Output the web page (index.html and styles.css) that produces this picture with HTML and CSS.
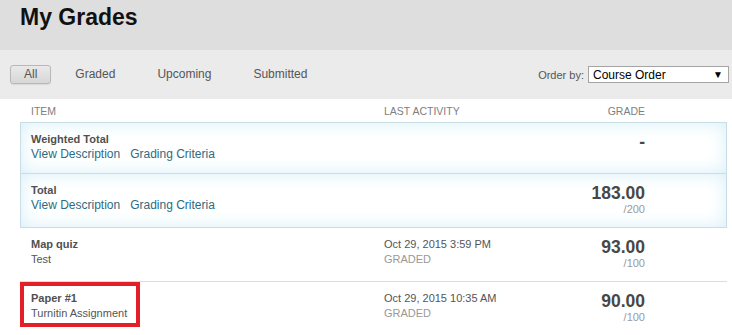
FILE: index.html
```html
<!DOCTYPE html>
<html>
<head>
    <title>My Grades</title>
    <link rel="stylesheet" href="styles.css">
</head>
<body>
    <div class="page-head">
        <h1>My Grades</h1>
    </div>

    <div class="toolbar">
        <div class="tabs">
            <span class="tab active">All</span>
            <span class="tab">Graded</span>
            <span class="tab">Upcoming</span>
            <span class="tab">Submitted</span>
        </div>
        <div class="order">
            <label>Order by:</label>
            <div class="order-select">
                <span>Course Order</span>
                <span class="arrow">&#9660;</span>
            </div>
        </div>
    </div>

    <div class="grades">
        <div class="row col-head">
            <div>Item</div>
            <div>Last Activity</div>
            <div class="grade-col">Grade</div>
        </div>

        <div class="row total">
            <div>
                <div class="title">Weighted Total</div>
                <div class="links"><a href="#">View Description</a><a href="#">Grading Criteria</a></div>
            </div>
            <div></div>
            <div class="grade-col">
                <div class="score">-</div>
            </div>
        </div>

        <div class="row total">
            <div>
                <div class="title">Total</div>
                <div class="links"><a href="#">View Description</a><a href="#">Grading Criteria</a></div>
            </div>
            <div></div>
            <div class="grade-col">
                <div class="score">183.00</div>
                <div class="points">/200</div>
            </div>
        </div>

        <div class="row">
            <div>
                <div class="title">Map quiz</div>
                <div class="sub">Test</div>
            </div>
            <div>
                <div class="date">Oct 29, 2015 3:59 PM</div>
                <div class="status">Graded</div>
            </div>
            <div class="grade-col">
                <div class="score">93.00</div>
                <div class="points">/100</div>
            </div>
        </div>

        <div class="row">
            <div>
                <div class="highlight">
                    <div class="title">Paper #1</div>
                    <div class="sub">Turnitin Assignment</div>
                </div>
            </div>
            <div>
                <div class="date">Oct 29, 2015 10:35 AM</div>
                <div class="status">Graded</div>
            </div>
            <div class="grade-col">
                <div class="score">90.00</div>
                <div class="points">/100</div>
            </div>
        </div>
    </div>
</body>
</html>
```
FILE: styles.css
```css
body {
    font-family: "Liberation Sans", Arial, sans-serif;
    color: #555;
    margin: 0;
    background: #fff;
}

.page-head {
    height: 50px;
    background-color: #dedede;
    padding: 4px 0 0 20px;
    box-sizing: border-box;
}

.page-head h1 {
    margin: 0;
    font-size: 23px;
    line-height: 27px;
    color: #111;
}

.toolbar {
    height: 49px;
    background-color: #ebebeb;
    display: flex;
    align-items: center;
    justify-content: space-between;
    padding: 0 3px 0 10px;
}

.tabs {
    display: flex;
    align-items: center;
    gap: 14px;
}

.tab {
    font-size: 12px;
    line-height: 17px;
    padding: 0 13px;
    border: 1px solid transparent;
    color: #555;
}

.tab.active {
    border-color: #b8b8b8;
    border-radius: 3px;
    background: linear-gradient(#e9e9e9, #d7d7d7);
    box-shadow: 0 1px 1px rgba(0, 0, 0, 0.08);
    margin-right: -4px;
}

.order {
    display: flex;
    align-items: center;
    gap: 4px;
}

.order label {
    font-size: 11px;
    color: #555;
}

.order-select {
    width: 130px;
    height: 15px;
    border: 1px solid #a4a4a4;
    background: #fff;
    display: flex;
    align-items: center;
    justify-content: space-between;
    padding: 0 5px 0 4px;
    font-size: 12px;
    color: #000;
}

.order-select .arrow {
    font-size: 10px;
}

.grades {
    margin: 0 5px 0 20px;
}

.row {
    display: grid;
    grid-template-columns: 353px 1fr auto;
    padding: 9px 82px 12px 11px;
    border-bottom: 1px solid #dddddd;
}

.col-head {
    height: 23px;
    box-sizing: border-box;
    padding-top: 0;
    padding-bottom: 0;
    align-items: center;
    border-bottom: none;
    font-size: 10.5px;
    text-transform: uppercase;
    color: #808080;
}

.total {
    border: 1px solid #c9dde5;
    padding-left: 10px;
    padding-right: 81px;
    box-shadow: inset 0 0 18px #d6eff8;
}

.total + .total {
    margin-top: -1px;
}

.col-head + .total {
    padding-bottom: 11px;
}

.title {
    font-size: 11px;
    font-weight: bold;
    line-height: 15px;
    color: #505050;
}

.sub {
    font-size: 11px;
    line-height: 15px;
    color: #555;
}

.links {
    font-size: 12px;
    line-height: 15px;
}

.links a {
    color: #2e6b7f;
    text-decoration: none;
    margin-right: 10px;
}

.date {
    font-size: 11px;
    line-height: 15px;
    color: #555;
}

.status {
    font-size: 11px;
    line-height: 15px;
    color: #999;
    text-transform: uppercase;
}

.grade-col {
    text-align: right;
}

.score {
    font-size: 17.5px;
    font-weight: bold;
    line-height: 20px;
    color: #474747;
}

.points {
    font-size: 11px;
    line-height: 12px;
    color: #9a9a9a;
}

.highlight {
    display: inline-block;
    border: 4px solid #e41f28;
    margin: -9px 0 0 -11px;
    padding: 5px 9px 2px 7px;
}
```
